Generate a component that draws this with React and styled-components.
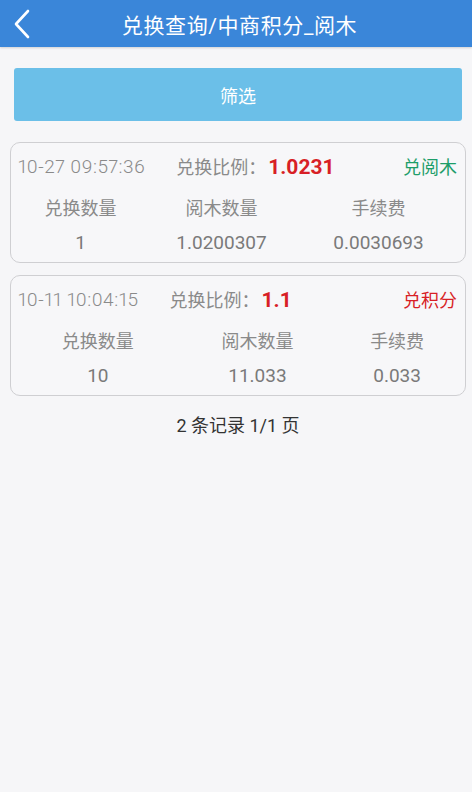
import React from 'react'
import styled, { createGlobalStyle } from 'styled-components'

const records = [
  { time: '10-27 09:57:36', ratio: '1.0231', type: '兑阅木', kind: 'green', amount: '1', wood: '1.0200307', fee: '0.0030693' },
  { time: '10-11 10:04:15', ratio: '1.1', type: '兑积分', kind: 'red', amount: '10', wood: '11.033', fee: '0.033' },
]

function App() {
  return (
    <Page>
      <GlobalStyle />
      <Header>
        <BackButton>
          <svg width="18" height="30" viewBox="0 0 18 30" fill="none">
            <path d="M15 2 L3 15 L15 28" stroke="#fff" strokeWidth="2.6" strokeLinecap="round" strokeLinejoin="round" />
          </svg>
        </BackButton>
        <Title>兑换查询/中商积分_阅木</Title>
      </Header>

      <Content>
        <FilterButton>筛选</FilterButton>

        <List>
          {records.map(r =>
            <Card key={r.time}>
              <CardTop>
                <Time>{r.time}</Time>
                <Ratio>兑换比例：<RatioValue>{r.ratio}</RatioValue></Ratio>
                <Type kind={r.kind}>{r.type}</Type>
              </CardTop>
              <Table>
                <tbody>
                  <tr>
                    <Th>兑换数量</Th>
                    <Th>阅木数量</Th>
                    <Th>手续费</Th>
                  </tr>
                  <tr>
                    <Td>{r.amount}</Td>
                    <Td>{r.wood}</Td>
                    <Td>{r.fee}</Td>
                  </tr>
                </tbody>
              </Table>
            </Card>
          )}
        </List>

        <Pager>2 条记录 1/1 页</Pager>
      </Content>
    </Page>
  )
}

const GlobalStyle = createGlobalStyle`
body {
  margin: 0;
  background: #f6f6f8;
  font-family: Roboto, "Noto Sans CJK SC", sans-serif;
}
`

const Page = styled.div`
min-height: 792px;
background: #f6f6f8;
`

const Header = styled.div`
position: relative;
height: 47px;
padding-left: 7px;
background: #3a86d9;
display: flex;
align-items: center;
justify-content: center;
box-shadow: 0 1px 2px rgba(0, 0, 0, 0.15);
`

const BackButton = styled.div`
position: absolute;
left: 13px;
top: 9px;
display: flex;
`

const Title = styled.div`
color: #fff;
font-size: 21px;
letter-spacing: 0.6px;
`

const Content = styled.div`
padding: 21px 6px 0 10px;
`

const FilterButton = styled.div`
margin: 0 4px 0 4px;
height: 53px;
background: #6bbfe8;
border-radius: 3px;
color: #fff;
font-size: 18px;
display: flex;
align-items: center;
justify-content: center;
`

const List = styled.div`
margin-top: 21px;
display: flex;
flex-direction: column;
gap: 12px;
`

const Card = styled.div`
border: 1px solid #cfcfd2;
border-radius: 10px;
background: #f7f7f9;
padding: 8px 8px 4px 7px;
`

const CardTop = styled.div`
display: flex;
align-items: center;
height: 30px;
`

const Time = styled.div`
color: #8a8a8a;
font-size: 19px;
font-weight: 300;
letter-spacing: 0.5px;
font-variant-numeric: proportional-nums;
`

const Ratio = styled.div`
margin-left: 31px;
color: #8a8a8a;
font-size: 18px;
display: flex;
align-items: baseline;
`

const RatioValue = styled.span`
color: #d81f26;
font-size: 21px;
font-weight: bold;
margin-left: 2px;
`

const Type = styled.div`
margin-left: auto;
font-size: 18px;
color: ${({ kind }) => kind === 'green' ? '#1e9e6a' : '#d81f26'};
`

const Table = styled.table`
width: 100%;
border-collapse: collapse;
margin-top: 7px;
`

const Th = styled.td`
text-align: center;
color: #8a8a8a;
font-size: 18px;
height: 38px;
padding: 0;
`

const Td = styled.td`
text-align: center;
color: #7a7a7a;
font-size: 19px;
height: 32px;
padding: 0;
`

const Pager = styled.div`
margin-top: 15px;
text-align: center;
color: #333;
font-size: 18px;
`

export default App
